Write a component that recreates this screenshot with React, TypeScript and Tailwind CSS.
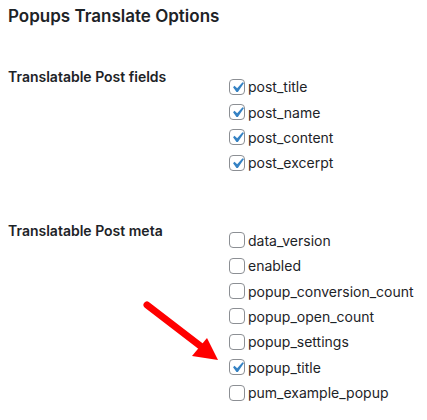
const postFields = [
  { name: 'post_title', checked: true },
  { name: 'post_name', checked: true },
  { name: 'post_content', checked: true },
  { name: 'post_excerpt', checked: true },
];

const postMeta = [
  { name: 'data_version', checked: false },
  { name: 'enabled', checked: false },
  { name: 'popup_conversion_count', checked: false },
  { name: 'popup_open_count', checked: false },
  { name: 'popup_settings', checked: false },
  { name: 'popup_title', checked: true },
  { name: 'pum_example_popup', checked: false },
];

function Box({ checked }: { checked: boolean }) {
  return (
    <span className="relative w-4 h-4 shrink-0 rounded-[4px] border border-[#8c8f94] bg-white">
      {checked && (
        <svg viewBox="0 0 20 20" className="absolute -left-[3px] -top-[3px] w-[21px] h-[21px]">
          <path d="M14.83 4.89l1.34.94-5.81 8.38H9.02L5.78 9.67l1.34-1.25 2.57 2.4z" fill="#3582c4" />
        </svg>
      )}
    </span>
  );
}

function Section({ title, items, className }: { title: string; items: { name: string; checked: boolean }[]; className?: string }) {
  return (
    <div className={`flex ${className ?? ''}`}>
      <div className="w-[229px] shrink-0 pl-2 text-[14px] leading-5 font-semibold text-[#1d2327]">{title}</div>
      <ul className="mt-[7px]">
        {items.map((it) => (
          <li key={it.name} className="h-[25.4px] flex items-center gap-[3px] text-[14px] text-[#1d2327]">
            <Box checked={it.checked} />
            <span>{it.name}</span>
          </li>
        ))}
      </ul>
    </div>
  );
}

export default function App() {
  return (
    <div className="relative w-[427px] h-[420px] bg-white overflow-hidden" style={{ fontFamily: 'Inter, "Open Sans", sans-serif' }}>
      <h2 className="pt-1 pl-2 text-[17px] leading-6 font-semibold text-[#1d2327]">Popups Translate Options</h2>

      <Section title="Translatable Post fields" items={postFields} className="mt-[39px]" />
      <Section title="Translatable Post meta" items={postMeta} className="mt-[45px]" />

      {/* red annotation arrow */}
      <svg className="absolute left-0 top-0 pointer-events-none" width="427" height="420">
        <line x1="147" y1="305" x2="203" y2="348" stroke="#ff0000" strokeWidth="7" strokeLinecap="round" />
        <polygon points="218,360 192,356 207,338" fill="#ff0000" />
      </svg>
    </div>
  );
}
